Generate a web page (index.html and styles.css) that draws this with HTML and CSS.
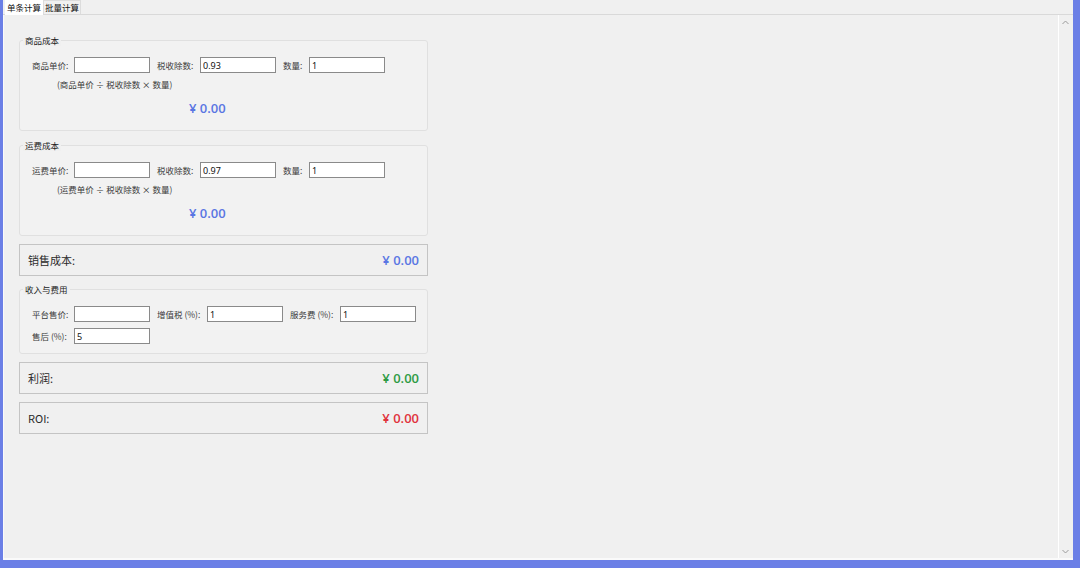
FILE: index.html
```html
<!DOCTYPE html>
<html lang="zh-CN">

<head>
    <meta charset="UTF-8">
    <title>成本利润计算</title>
    <link rel="stylesheet" href="styles.css">
</head>

<body>
    <div class="window">
        <div class="tabs">
            <div class="tab active">单条计算</div>
            <div class="tab">批量计算</div>
        </div>

        <div class="page">
            <div class="content">

                <!-- 商品成本 -->
                <div class="group goods">
                    <span class="group-title">商品成本</span>
                    <div class="row">
                        <label class="lbl w35">商品单价:</label>
                        <input type="text" class="field" value="" />
                        <label class="lbl w36">税收除数:</label>
                        <input type="text" class="field" value="0.93" />
                        <label class="lbl w19">数量:</label>
                        <input type="text" class="field" value="1" />
                    </div>
                    <p class="formula">(商品单价 ÷ 税收除数 × 数量)</p>
                    <p class="amount blue">¥ 0.00</p>
                </div>

                <!-- 运费成本 -->
                <div class="group freight">
                    <span class="group-title">运费成本</span>
                    <div class="row">
                        <label class="lbl w35">运费单价:</label>
                        <input type="text" class="field" value="" />
                        <label class="lbl w36">税收除数:</label>
                        <input type="text" class="field" value="0.97" />
                        <label class="lbl w19">数量:</label>
                        <input type="text" class="field" value="1" />
                    </div>
                    <p class="formula">(运费单价 ÷ 税收除数 × 数量)</p>
                    <p class="amount blue">¥ 0.00</p>
                </div>

                <div class="summary cost">
                    <span class="summary-label">销售成本:</span>
                    <span class="summary-value blue">¥ 0.00</span>
                </div>

                <!-- 收入与费用 -->
                <div class="group income">
                    <span class="group-title">收入与费用</span>
                    <div class="row">
                        <label class="lbl w35">平台售价:</label>
                        <input type="text" class="field" value="" />
                        <label class="lbl w43">增值税 (%):</label>
                        <input type="text" class="field" value="1" />
                        <label class="lbl w43">服务费 (%):</label>
                        <input type="text" class="field" value="1" />
                    </div>
                    <div class="row second">
                        <label class="lbl w35">售后 (%):</label>
                        <input type="text" class="field" value="5" />
                    </div>
                </div>

                <div class="summary profit">
                    <span class="summary-label">利润:</span>
                    <span class="summary-value green">¥ 0.00</span>
                </div>

                <div class="summary roi">
                    <span class="summary-label">ROI:</span>
                    <span class="summary-value red">¥ 0.00</span>
                </div>
            </div>

            <div class="scrollbar">
                <svg class="arrow" width="7" height="5" viewBox="0 0 7 5">
                    <path d="M0.5 4 L3.5 1 L6.5 4" fill="none" stroke="#9a9a9a" stroke-width="1" />
                </svg>
                <svg class="arrow" width="7" height="5" viewBox="0 0 7 5">
                    <path d="M0.5 1 L3.5 4 L6.5 1" fill="none" stroke="#9a9a9a" stroke-width="1" />
                </svg>
            </div>
        </div>
    </div>
</body>

</html>
```

FILE: styles.css
```css
html,
body {
    margin: 0;
    padding: 0;
}

body {
    font-family: "Noto Sans CJK SC", "Noto Sans", sans-serif;
    background: #f0f0f0;
    color: #222;
}

.window {
    width: 1080px;
    height: 568px;
    box-sizing: border-box;
    border-left: 3px solid #6b7fe6;
    border-right: 7px solid #6b7fe6;
    border-bottom: 8px solid #6b7fe6;
    background: #f0f0f0;
    display: flex;
    flex-direction: column;
}

/* tab strip */
.tabs {
    height: 15px;
    box-sizing: border-box;
    display: flex;
    align-items: flex-end;
    padding-left: 2px;
    border-bottom: 1px solid #d9d9d9;
}

.tab {
    font-size: 8.5px;
    line-height: 13px;
    height: 14px;
    padding: 0 1px;
    color: #111;
    border: 1px solid #dcdcdc;
    border-bottom: none;
    box-sizing: border-box;
}

.tab.active {
    background: #ffffff;
    height: 15px;
    margin-bottom: -1px;
    border-color: #ffffff;
}

.page {
    flex: 1;
    display: flex;
    border-left: 1px solid #fafafa;
    border-bottom: 2px solid #fafafa;
    min-height: 0;
}

.content {
    flex: 1;
    padding: 25px 0 0 15px;
    display: flex;
    flex-direction: column;
    align-items: flex-start;
}

.scrollbar {
    width: 12px;
    margin-right: 2px;
    border-left: 1px solid #ffffff;
    display: flex;
    flex-direction: column;
    align-items: center;
    justify-content: space-between;
    padding: 5px 0 4px;
}

/* group boxes */
.group {
    position: relative;
    width: 409px;
    box-sizing: border-box;
    border: 1px solid #e0e0e0;
    border-radius: 3px;
    background: #f2f2f2;
    padding: 16px 0 0 12px;
}

.group-title {
    position: absolute;
    top: -7px;
    left: 3px;
    padding: 0 2px;
    font-size: 8.5px;
    line-height: 12px;
    background: #f0f0f0;
    color: #222;
}

.goods {
    height: 91px;
}

.freight {
    height: 91px;
    margin-top: 14px;
}

.income {
    height: 65px;
    margin-top: 13px;
}

.row {
    display: flex;
    align-items: center;
    height: 16px;
}

.row.second {
    margin-top: 6px;
}

.lbl {
    font-size: 8.5px;
    line-height: 12px;
    color: #3a3a3a;
    white-space: nowrap;
    margin-right: 7px;
}

.w35 { width: 35px; }
.w36 { width: 36px; }
.w19 { width: 19px; }
.w43 { width: 43px; }

.field {
    width: 76px;
    height: 16px;
    box-sizing: border-box;
    border: 1px solid #8a8a8a;
    background: #ffffff;
    padding: 0 2px;
    margin: 0 7px 0 0;
    font-family: "Noto Sans", sans-serif;
    font-size: 9px;
    color: #111;
    outline: none;
}

.formula {
    margin: 5px 0 0 25px;
    font-size: 8.5px;
    line-height: 12px;
    color: #3a3a3a;
}

.amount {
    margin: 10px 0 0 157px;
    font-family: "Open Sans", "Noto Sans", sans-serif;
    font-weight: 600;
    font-size: 13px;
    line-height: 16px;
}

/* result rows */
.summary {
    width: 409px;
    height: 32px;
    box-sizing: border-box;
    border: 1px solid #c4c4c4;
    background: #f0f0f0;
    display: flex;
    align-items: center;
    justify-content: space-between;
    padding: 0 8px;
}

.cost {
    margin-top: 8px;
}

.profit {
    margin-top: 8px;
}

.roi {
    margin-top: 8px;
}

.summary-label {
    font-size: 11px;
    color: #2a2a2a;
}

.summary-value {
    font-family: "Open Sans", "Noto Sans", sans-serif;
    font-weight: 600;
    font-size: 13px;
}

.blue { color: #5a76e3; }
.green { color: #2e9b44; }
.red { color: #e0333d; }
```
